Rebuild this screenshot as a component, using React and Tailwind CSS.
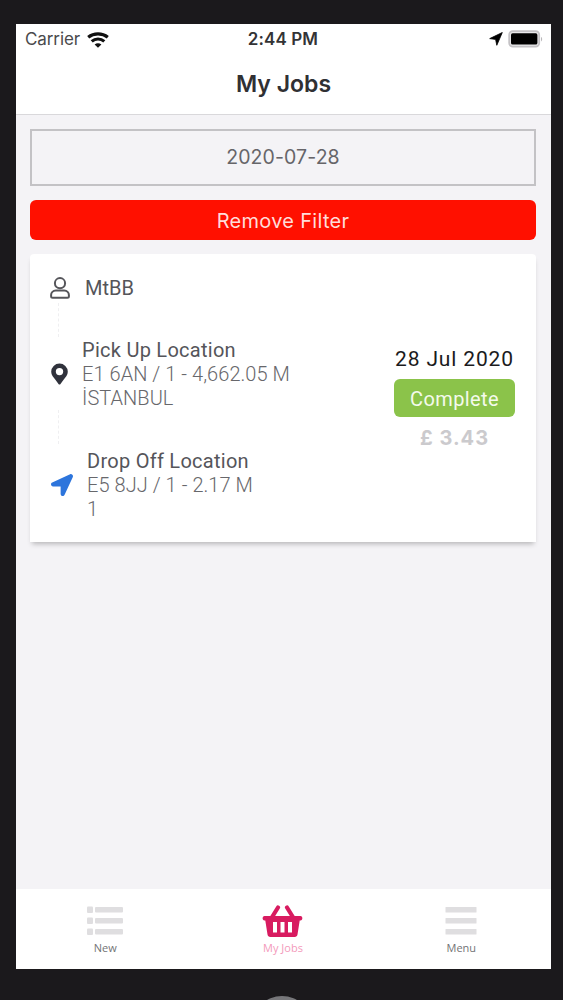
import React from 'react';
import { FaLocationArrow } from 'react-icons/fa';

const WifiIcon = () => (
    <svg width="22" height="16" viewBox="0 0 22 16" fill="none" stroke="#111" strokeWidth="3.2">
        <path d="M1.2 5.3C6.8.8 15.2.8 20.8 5.3" />
        <path d="M4.7 9.4C8.4 6.2 13.6 6.2 17.3 9.4" />
        <path d="M7.6 12.5C9.6 10.8 12.4 10.8 14.4 12.5L11 15.8Z" fill="#111" stroke="none" />
    </svg>
);

const StatusArrowIcon = () => (
    <svg width="14" height="14" viewBox="0 0 14 14">
        <path d="M13.3 0.5L0.7 6.6L6.6 7.4L7.8 13.3Z" fill="#000" stroke="#000" strokeWidth="0.8" strokeLinejoin="round" />
    </svg>
);

const BatteryIcon = () => (
    <svg width="36" height="18" viewBox="0 0 36 18">
        <rect x="1.2" y="1.2" width="30" height="15.4" rx="3.6" fill="#e9e8ea" stroke="#c4c2c5" strokeWidth="1.8" />
        <rect x="3" y="3.3" width="26.4" height="11.2" rx="1.6" fill="#000" />
        <path d="M33 7v4.4c1.5-.5 1.5-3.9 0-4.4Z" fill="#b9b7b9" />
    </svg>
);

const UserIcon = () => (
    <svg width="20" height="22" viewBox="0 0 20 22" fill="none" stroke="#55555a" strokeWidth="2">
        <circle cx="10" cy="6.2" r="5.1" />
        <path d="M5.8 13.6h8.4c2.8 0 4.7 1.9 4.7 4.5v1.2c0 .9-.6 1.5-1.5 1.5H2.6c-.9 0-1.5-.6-1.5-1.5v-1.2c0-2.6 1.9-4.5 4.7-4.5Z" />
    </svg>
);

const PinIcon = () => (
    <svg width="17" height="22" viewBox="0 0 17 22" className="ml-[21px]">
        <path
            fillRule="evenodd"
            fill="#30323c"
            d="M8.5 0.5a8.300 8.300 0 0 0-8.300 8.200c0 3.300 2.100 5.200 4.200 8L7.500 21c.5.7 1.500.7 2 0l3.100-4.300c2.100-2.800 4.200-4.700 4.200-8a8.300 8.300 0 0 0-8.300-8.200Zm0 4.400a3.700 3.700 0 1 1 0 7.400a3.700 3.700 0 0 1 0-7.400Z"
        />
    </svg>
);

const BasketIcon = () => (
    <svg width="41" height="33" viewBox="0 0 41 33" fill="#d81b60">
        <path d="M16 2.5L9.5 13M25 2.5L31.5 13" stroke="#d81b60" strokeWidth="4.2" strokeLinecap="round" />
        <path
            fillRule="evenodd"
            d="M2.5 11h36c2.500 0 2.500 4.500 0 4.500h-.8l-2.200 14c-.2 1.600-1.300 2.500-2.800 2.500H8.300c-1.500 0-2.600-.9-2.800-2.500l-2.200-14h-.8c-2.500 0-2.500-4.500 0-4.500ZM11 17v10.500h4V17ZM18.500 17v10.500h4V17ZM26 17v10.500h4V17Z"
        />
    </svg>
);

const ListIcon = () => (
    <svg width="38" height="30" viewBox="0 0 38 30" fill="#dfdee0">
        <rect x="1" y="0.5" width="6" height="6.5" rx="1" />
        <rect x="1" y="11.5" width="6" height="6.5" rx="1" />
        <rect x="1" y="22.5" width="6" height="6.5" rx="1" />
        <rect x="9" y="1" width="28" height="5.5" rx="1" />
        <rect x="9" y="12" width="28" height="5.5" rx="1" />
        <rect x="9" y="23" width="28" height="5.5" rx="1" />
    </svg>
);

const MenuIcon = () => (
    <svg width="32" height="30" viewBox="0 0 32 30" fill="#dfdee0">
        <rect x="0.5" y="1" width="31" height="5.5" rx="0.5" />
        <rect x="0.5" y="12" width="31" height="5.5" rx="0.5" />
        <rect x="0.5" y="23" width="31" height="5.5" rx="0.5" />
    </svg>
);

const StatusBar = () => (
    <div className="grid grid-cols-3 items-center h-[30px] pl-[9px] pr-[7px]">
        <div className="flex items-center gap-[7px] pt-[2px] text-[17px] tracking-[-0.1px] text-[#4a4a4c]">
            Carrier
            <WifiIcon />
        </div>
        <div className="pt-[2px] -ml-[3px] text-center text-[17px] font-semibold tracking-[0.1px] text-[#333335]">2:44 PM</div>
        <div className="flex items-center justify-end gap-[5px]">
            <StatusArrowIcon />
            <BatteryIcon />
        </div>
    </div>
);

const Location = ({ title, lines, className }) => (
    <div className={className}>
        <h3 className="font-normal tracking-[0.27px] text-[#55555a]">{title}</h3>
        {lines.map((line) => (
            <p key={line} className="font-light tracking-[0.05px] text-[#67676b]">{line}</p>
        ))}
    </div>
);

const Connector = () => (
    <div className="ml-[28px] w-0 h-[34px] border-l border-dashed border-[#efeff1]"></div>
);

const JobCard = () => (
    <div className="flex h-[288px] bg-white rounded-t-[4px] shadow-[0_4px_5px_-2px_rgba(0,0,0,0.25)] font-[Roboto,sans-serif]">
        <div className="flex flex-col flex-1 text-[20px] leading-6">
            <div className="flex items-center mt-[22px] h-6 pl-[20px]">
                <UserIcon />
                <span className="ml-[15px] text-[#55555a]">MtBB</span>
            </div>
            <div className="mt-[3px]"><Connector /></div>
            <div className="flex items-center mt-[1px]">
                <PinIcon />
                <Location
                    className="ml-[14px]"
                    title="Pick Up Location"
                    lines={['E1 6AN / 1 - 4,662.05 M', 'İSTANBUL']}
                />
            </div>
            <Connector />
            <div className="flex items-center mt-[5px]">
                <FaLocationArrow size={22} className="ml-[21px] text-[#2d75dc]" />
                <Location
                    className="ml-[14px]"
                    title="Drop Off Location"
                    lines={['E5 8JJ / 1 - 2.17 M', '1']}
                />
            </div>
        </div>
        <div className="flex flex-col items-center w-[121px] mr-[21px] pt-[92px]">
            <div className="mt-[1px] text-[21px] leading-6 tracking-[0.85px] text-[#1b1b1d] whitespace-nowrap">28 Jul 2020</div>
            <div className="mt-[8px] w-full h-[38px] rounded-[6px] bg-[#8bc34a] text-center text-[20px] leading-[40px] tracking-[0.4px] text-[#f4faec]">
                Complete
            </div>
            <div className="mt-[9px] font-[Inter,sans-serif] text-[20px] leading-6 font-bold tracking-[1px] text-[#cbcacd]">£ 3.43</div>
        </div>
    </div>
);

const TabBar = () => (
    <div className="grid grid-cols-3 h-[80px] pt-[17px] bg-white font-['Open_Sans',sans-serif] text-[11px] leading-[14px]">
        <div className="flex flex-col items-center gap-[5px] text-[#737376]">
            <ListIcon />
            New
        </div>
        <div className="flex flex-col items-center gap-[3px] -mt-[1px] -ml-[1px] text-[#f39abb]">
            <BasketIcon />
            My Jobs
        </div>
        <div className="flex flex-col items-center gap-[5px] -ml-[1px] text-[#737376]">
            <MenuIcon />
            Menu
        </div>
    </div>
);

const App = () => {
    return (
        <div className="flex flex-col w-[563px] h-[1000px] overflow-hidden bg-[#1b191c] pt-[24px] font-[Inter,sans-serif]">
            <div className="flex flex-col w-[535px] h-[945px] ml-[16px] shrink-0 bg-[#f4f3f6]">
                <header className="h-[91px] bg-white border-b border-[#d9d8db]">
                    <StatusBar />
                    <h1 className="mt-[14px] text-center text-[23px] leading-8 font-semibold text-[#303033]">My Jobs</h1>
                </header>
                <main className="flex flex-col flex-1 pl-[14px] pr-[15px] pt-[14px]">
                    <button className="h-[57px] border-2 border-[#c3c2c5] pt-[1px] text-[19.5px] tracking-[0.1px] text-[#666569]">
                        2020-07-28
                    </button>
                    <button className="mt-[14px] mb-[14px] h-[40px] rounded-[6px] bg-[#ff1000] pt-[1px] text-[20px] tracking-[0.3px] text-[#ffdcd9]">
                        Remove Filter
                    </button>
                    <JobCard />
                </main>
                <TabBar />
            </div>
            {/* Home button of the device */}
            <div className="mx-auto mt-[27px] size-[60px] shrink-0 rounded-full bg-[#77777a]"></div>
        </div>
    );
};

export default App;
